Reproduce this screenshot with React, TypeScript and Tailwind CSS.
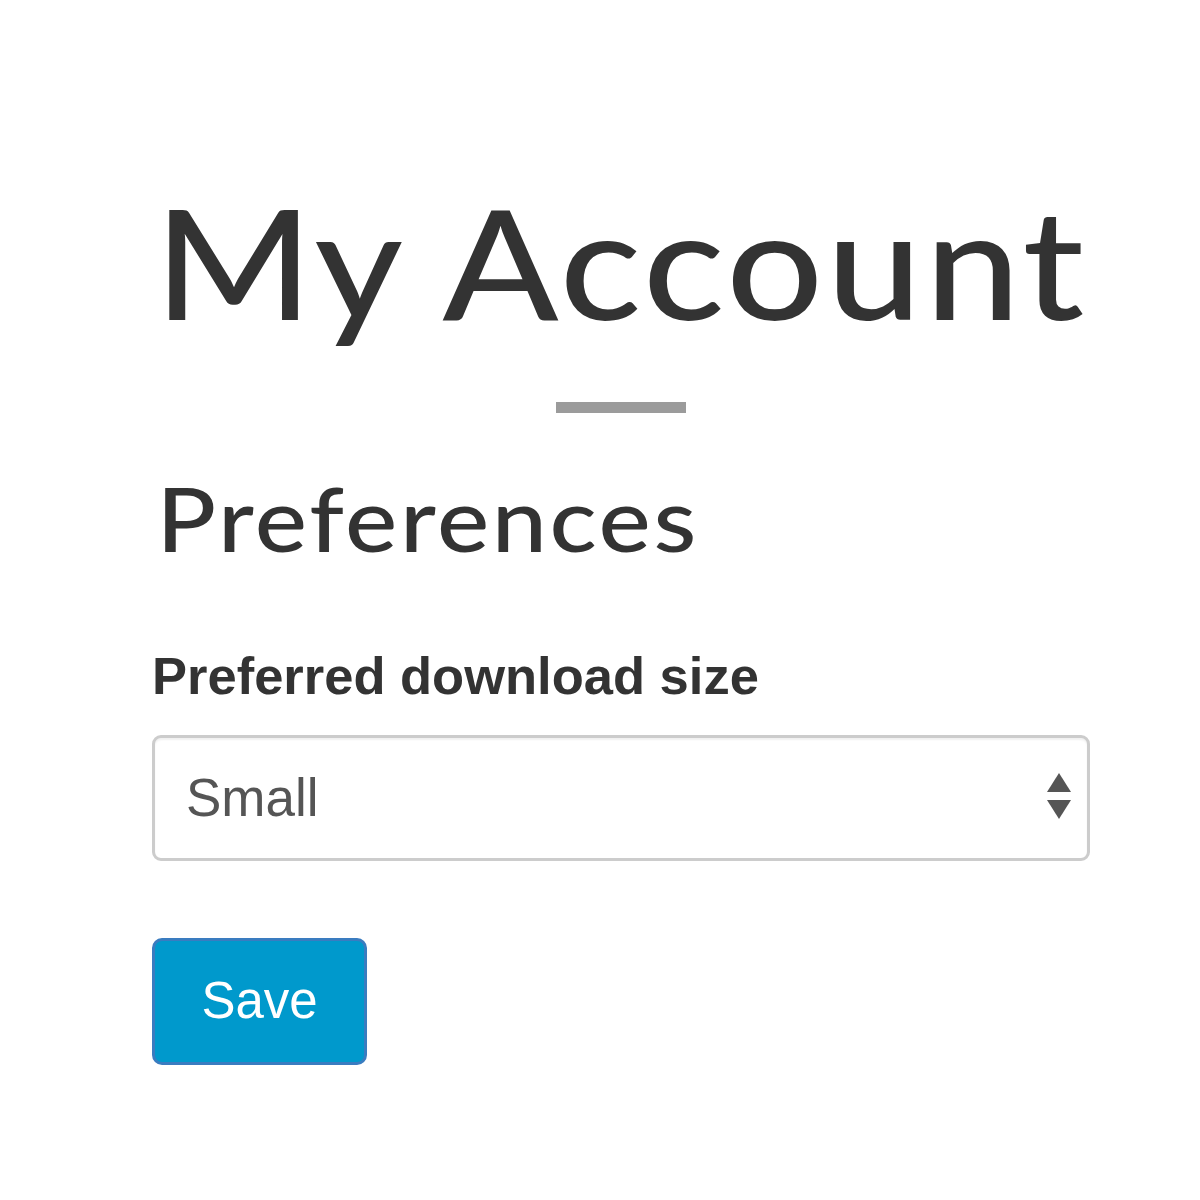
import React from 'react'

export default function App() {
  return (
    <div className="min-h-[1200px] w-[1200px] bg-white text-[#333]">
      <div className="ml-[152px] w-[938px] pt-[181px]">
        {/* Page title */}
        <h1 className="w-fit origin-left scale-x-[1.12] pl-[2px] font-['Lato',sans-serif] text-[152px] leading-[160px] font-medium tracking-[3px]">
          My Account
        </h1>
        <div className="mx-auto mt-[61px] h-[11px] w-[130px] bg-[#9b9b9b]" />

        {/* Preferences */}
        <h2 className="mt-[55px] w-fit origin-left scale-x-[1.12] pl-[4px] font-['Lato',sans-serif] text-[88px] leading-[100px] font-medium tracking-[2.4px]">
          Preferences
        </h2>
        <form className="mt-[78px]" onSubmit={(e) => e.preventDefault()}>
          <label className="block font-['Liberation_Sans',Arial,sans-serif] text-[52.5px] leading-[60px] font-bold">
            Preferred download size
          </label>
          <div className="relative mt-[29px]">
            <select
              defaultValue="small"
              className="block h-[126px] w-full appearance-none rounded-[9px] border-[3px] border-[#cccccc] bg-white pl-[31px] font-['Liberation_Sans',Arial,sans-serif] text-[53px] text-[#555] shadow-[inset_0_2px_2px_rgba(0,0,0,0.06)] outline-none"
            >
              <option value="small">Small</option>
              <option value="medium">Medium</option>
              <option value="large">Large</option>
            </select>
            <svg
              className="pointer-events-none absolute right-[18px] top-[38px]"
              width="26"
              height="48"
              viewBox="0 0 26 48"
              fill="#555"
            >
              <polygon points="13,0 25,19 1,19" />
              <polygon points="1,27 25,27 13,46" />
            </svg>
          </div>
          <button
            type="submit"
            className="mt-[77px] h-[127px] w-[215px] rounded-[10px] border-[3px] border-[#3a7cc0] bg-[#0099cc] font-['Liberation_Sans',Arial,sans-serif] text-[51px] text-white"
          >
            Save
          </button>
        </form>
      </div>
    </div>
  )
}
